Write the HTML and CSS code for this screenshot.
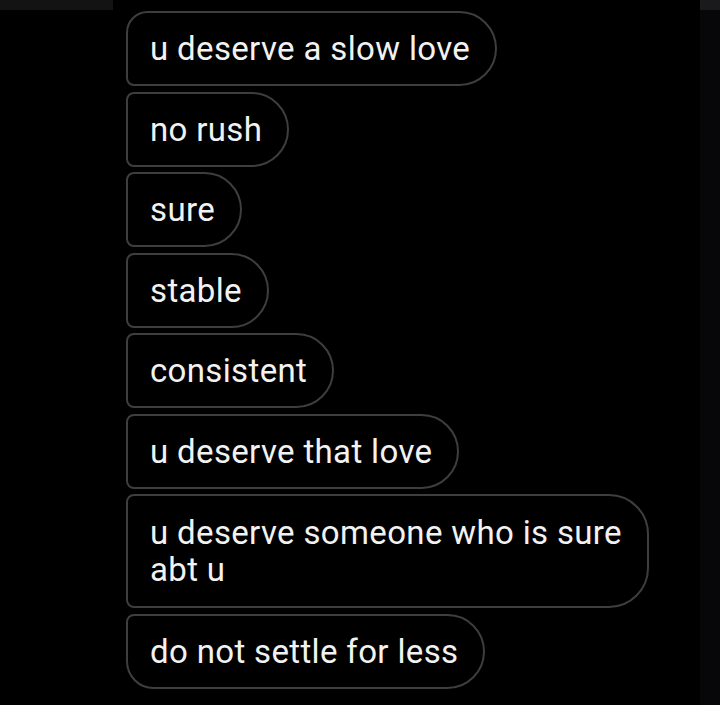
FILE: index.html
```html
<!DOCTYPE html>
<html>
<head>
<meta charset="utf-8">
<link rel="stylesheet" href="styles.css">
</head>
<body>
<div class="page">
  <div class="topbar">
    <div class="strip-left"></div>
    <div class="strip-right"></div>
  </div>
  <div class="body-row">
    <div class="chat">
      <div class="bubble first">u deserve a slow love</div>
      <div class="bubble">no rush</div>
      <div class="bubble">sure</div>
      <div class="bubble">stable</div>
      <div class="bubble">consistent</div>
      <div class="bubble">u deserve that love</div>
      <div class="bubble multi">u deserve someone who is sure<br>abt u</div>
      <div class="bubble last">do not settle for less</div>
    </div>
    <div class="edge"></div>
  </div>
</div>
</body>
</html>
```
FILE: styles.css
```css
html, body {
  margin: 0;
  padding: 0;
  background: #000;
}
.page {
  width: 720px;
  height: 705px;
  overflow: hidden;
  display: flex;
  flex-direction: column;
  background: #000;
  font-family: Roboto, "Liberation Sans", sans-serif;
}
.topbar {
  height: 10px;
  display: flex;
  justify-content: space-between;
  flex-shrink: 0;
}
.strip-left {
  width: 113px;
  background: #131313;
}
.strip-right {
  width: 20px;
  background: #1a1a1c;
}
.body-row {
  flex: 1;
  display: flex;
}
.chat {
  flex: 1;
  display: flex;
  flex-direction: column;
  align-items: flex-start;
  gap: 5.5px;
  padding: 1px 0 0 126px;
}
.edge {
  width: 20px;
  background: #07070a;
}
.bubble {
  border: 2px solid #3e3e3e;
  border-radius: 8px 38px 38px 8px;
  padding: 17px 25px 17px 22px;
  color: #f2f2f2;
  font-size: 33px;
  line-height: 37px;
  letter-spacing: 0.35px;
}
.bubble.first {
  border-top-left-radius: 22px;
}
.bubble.multi {
  padding-top: 18px;
  padding-bottom: 18px;
  border-radius: 8px 40px 40px 8px;
}
.bubble.last {
  border-bottom-left-radius: 28px;
}
```
